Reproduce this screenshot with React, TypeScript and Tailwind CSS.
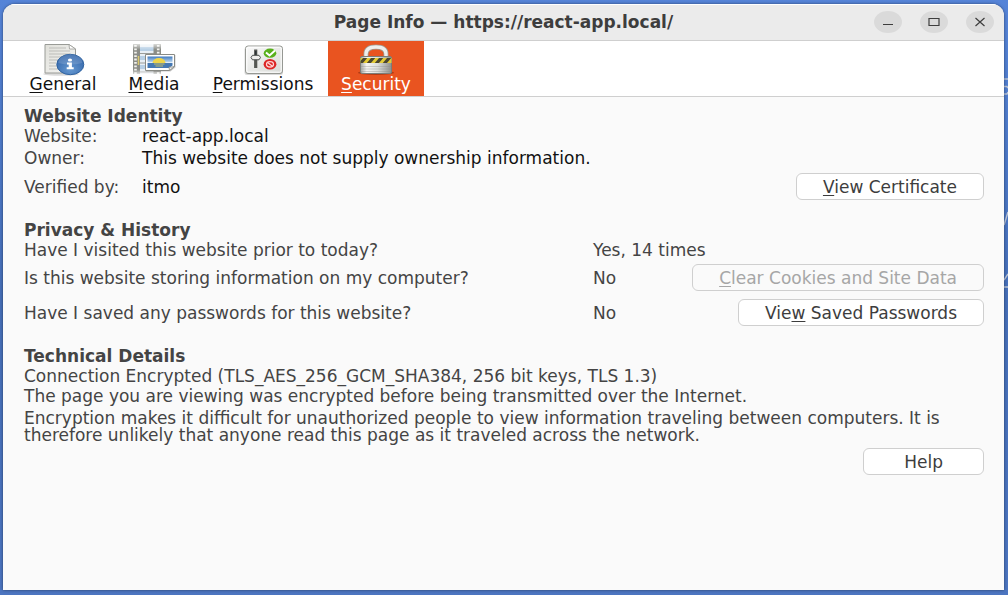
import { useState } from "react";
import type { ReactNode } from "react";

function GeneralIcon() {
  return (
    <svg viewBox="0 0 44 33" className="h-[33px] w-11" aria-hidden="true">
      <defs>
        <linearGradient id="paper" x1="0" y1="0" x2="1" y2="1">
          <stop offset="0" stopColor="#e0e0da" />
          <stop offset="1" stopColor="#f6f6f4" />
        </linearGradient>
        <radialGradient id="info" cx="0.5" cy="0.75" r="0.75">
          <stop offset="0" stopColor="#6598d0" />
          <stop offset="1" stopColor="#2f62a8" />
        </radialGradient>
      </defs>
      <ellipse cx="20" cy="31" rx="18" ry="1.8" fill="#000" opacity="0.14" />
      <path d="M4 1.500H28L34.500 6V30H4Z" fill="url(#paper)" stroke="#999b96" />
      <path d="M28 1.500L28.500 6H34.500Z" fill="#fff" stroke="#9a9a96" strokeWidth="0.800" />
      <path d="M8 5H25M8 8H29M8 11H29M8 14H28M8 17H17M8 20H15M8 23H16M8 26H18" stroke="#bdbdb9" strokeWidth="1" />
      <ellipse cx="29.300" cy="21.500" rx="13.500" ry="10.200" fill="url(#info)" stroke="#2f629f" />
      <path d="M17.300 20a12 8.700 0 0 1 24 0q-12 3-24 0Z" fill="#fff" opacity="0.150" />
      <ellipse cx="29" cy="17" rx="2.100" ry="1.500" fill="#fff" />
      <path d="M26 19.500h4.900v4.800h1.800v2h-7v-2h2v-2.900h-1.700Z" fill="#fff" />
    </svg>
  );
}

function MediaIcon() {
  return (
    <svg viewBox="0 0 44 33" className="h-[33px] w-11" aria-hidden="true">
      <defs>
        <linearGradient id="fade" x1="0" y1="0" x2="0" y2="1">
          <stop offset="0" stopColor="#fff" stopOpacity="0.200" />
          <stop offset="0.200" stopColor="#fff" />
          <stop offset="0.800" stopColor="#fff" />
          <stop offset="1" stopColor="#fff" stopOpacity="0.050" />
        </linearGradient>
        <mask id="film">
          <rect width="44" height="33" fill="url(#fade)" />
        </mask>
        <linearGradient id="sky" x1="0" y1="0" x2="0" y2="1">
          <stop offset="0" stopColor="#3f79bd" />
          <stop offset="1" stopColor="#c3dcf2" />
        </linearGradient>
      </defs>
      <g mask="url(#film)">
        <path d="M1 1H29V31H1Z" fill="#e8eff5" />
        <path d="M8 4H22V8H8ZM8 13H22V17H8ZM8 22H22V26H8Z" fill="#b8d0e6" />
        <path d="M8 10.500H22M8 20H22M8 29H22" stroke="#9a9c99" strokeWidth="1" />
        <path d="M1 1H8V31H1ZM21.500 1H29V31H21.500Z" fill="#8b8d87" />
        <path d="M3.500 2V31M26.200 2V31" stroke="#f3f3f0" strokeWidth="2.600" strokeDasharray="1.800 1.600" />
        <path d="M6.500 13V22" stroke="#d9c870" strokeWidth="1.500" />
      </g>
      <path d="M14 12H43.500V24.500L38.500 28.500H14Z" fill="#000" opacity="0.200" />
      <path d="M13.500 11.500H42.500V23.500L37.500 27.500H13.500Z" fill="#fff" stroke="#888a85" />
      <path d="M15.500 13.500H40.500V19.500H15.500Z" fill="url(#sky)" />
      <path d="M20.500 20a6.500 5 0 0 1 13 0Z" fill="#edd44a" />
      <path d="M15.500 20H40.500V22.500L37 25H15.500Z" fill="#4478b3" />
      <path d="M22 21H32.500M23.500 23H31" stroke="#d6c65c" strokeWidth="0.900" />
      <path d="M37.500 27.500L37 24Q40 24.300 42.500 23.500Z" fill="#eeeeec" stroke="#888a85" strokeWidth="0.800" />
    </svg>
  );
}

function PermissionsIcon() {
  return (
    <svg viewBox="0 0 44 33" className="h-[33px] w-11" aria-hidden="true">
      <defs>
        <linearGradient id="panel" x1="0" y1="0" x2="1" y2="1">
          <stop offset="0" stopColor="#fafafa" />
          <stop offset="1" stopColor="#d8dad6" />
        </linearGradient>
      </defs>
      <rect x="3.500" y="4" width="38.500" height="28" rx="2.500" fill="#000" opacity="0.150" />
      <rect x="4.500" y="3" width="37" height="27.500" rx="2.500" fill="url(#panel)" stroke="#969893" />
      <rect x="5.800" y="4.200" width="34.400" height="25" rx="1.500" fill="none" stroke="#fff" />
      <path d="M14.700 6.500V25" stroke="#555753" strokeWidth="3.200" />
      <path d="M14.700 8V12" stroke="#2e3436" strokeWidth="1.500" />
      <path d="M11.500 12.300H18L19.500 14.500L18 16.800H11.500L10 14.500Z" fill="#eeeeec" stroke="#4b4f4d" />
      <ellipse cx="29" cy="10.200" rx="6.300" ry="4.600" fill="#58b01c" />
      <path d="M25 9.500L28.500 12.400L34 7.500" fill="none" stroke="#fff" strokeWidth="2" />
      <ellipse cx="29" cy="21.300" rx="6.400" ry="5.200" fill="#dc2626" />
      <ellipse cx="29" cy="21.300" rx="3.500" ry="2.700" fill="none" stroke="#ffd4d4" strokeWidth="1.300" />
      <path d="M26.500 19.400L31.500 23.200" stroke="#ffd4d4" strokeWidth="1.300" />
    </svg>
  );
}

function SecurityIcon() {
  return (
    <svg viewBox="0 0 44 33" className="h-[33px] w-11" aria-hidden="true">
      <defs>
        <linearGradient id="metal" x1="0" y1="0" x2="1" y2="0">
          <stop offset="0" stopColor="#a5a7a2" />
          <stop offset="0.200" stopColor="#f5f5f3" />
          <stop offset="0.550" stopColor="#dddedb" />
          <stop offset="1" stopColor="#8f918d" />
        </linearGradient>
        <clipPath id="band">
          <rect x="6.500" y="15" width="31" height="5" />
        </clipPath>
      </defs>
      <ellipse cx="22" cy="29.800" rx="18" ry="2.200" fill="#4a1000" opacity="0.350" />
      <path d="M12 16V11Q12 4 22 4T32 11V16" fill="none" stroke="#a09a90" strokeWidth="5" />
      <path d="M12 16V11Q12 4 22 4T32 11V16" fill="none" stroke="#eeeeec" strokeWidth="3.400" />
      <rect x="6.500" y="13.500" width="31" height="17" rx="1.500" fill="url(#metal)" stroke="#7b7d78" />
      <rect x="6.500" y="15" width="31" height="5" fill="#e3cb35" />
      <path
        d="M6 21L12 14M14 21L20 14M22 21L28 14M30 21L36 14"
        stroke="#4a4630"
        strokeWidth="3.200"
        clipPath="url(#band)"
      />
      <path d="M7 23.500H37M7 26H37M7 28.500H37" stroke="#888a85" strokeWidth="0.700" opacity="0.500" />
    </svg>
  );
}

function Key({ children }: { children: string }) {
  return <span className="underline decoration-1 underline-offset-2">{children}</span>;
}

const tabs: { id: string; key: string; rest: string; width: string; icon: ReactNode }[] = [
  { id: "general", key: "G", rest: "eneral", width: "w-[94px]", icon: <GeneralIcon /> },
  { id: "media", key: "M", rest: "edia", width: "w-[88px]", icon: <MediaIcon /> },
  { id: "permissions", key: "P", rest: "ermissions", width: "w-[130px]", icon: <PermissionsIcon /> },
  { id: "security", key: "S", rest: "ecurity", width: "w-24", icon: <SecurityIcon /> },
];

function Action({ children, disabled = false }: { children: ReactNode; disabled?: boolean }) {
  return (
    <button
      type="button"
      disabled={disabled}
      className="h-[27px] shrink-0 rounded-md border border-[#cfcfcf] bg-white px-[26px] leading-5 whitespace-nowrap text-[#3d3d3d] disabled:bg-[#fafafa] disabled:text-[#a6a6a6]"
    >
      {children}
    </button>
  );
}

function WindowButton({ label, path }: { label: string; path: string }) {
  return (
    <button type="button" aria-label={label} className="flex h-[22px] w-7 items-center justify-center rounded-[50%] bg-[#dadada]">
      <svg viewBox="0 0 12 10" className="h-2.5 w-3" fill="none" stroke="#3d3d3d" strokeWidth="1.200" aria-hidden="true">
        <path d={path} />
      </svg>
    </button>
  );
}

function IdentityRow({ name, children }: { name: string; children: ReactNode }) {
  return (
    <div className="flex items-center">
      <dt className="w-[118px] shrink-0">{name}</dt>
      <dd className="text-[#111111]">{children}</dd>
    </div>
  );
}

function HistoryRow({ question, answer, action }: { question: string; answer: string; action?: ReactNode }) {
  return (
    <div className="grid grid-cols-[569fr_391fr] items-center">
      <dt>{question}</dt>
      <dd className="flex items-center justify-between">
        <span>{answer}</span>
        {action}
      </dd>
    </div>
  );
}

export default function App() {
  const [active, setActive] = useState("security");

  return (
    <div className="relative flex min-h-screen flex-col bg-[#4a72b8] bg-linear-to-b from-[#5584d8] via-[#466fb8] to-[#4c75c0] pt-1 pr-1 pb-[5px] pl-[3px] font-['DejaVu_Sans',sans-serif] text-[17px] leading-5 text-[#444444]">
      <svg viewBox="0 0 4 240" className="absolute top-[70px] right-0 h-60 w-1" fill="none" stroke="#b9c3d6" strokeWidth="1.500" aria-hidden="true">
        <path d="M0 9H4M0 16.500H3L4 18M0 24H3L4 22M0 155L4 142M0 210L4 204M0 217H4" />
      </svg>
      <div className="relative flex flex-1 flex-col overflow-hidden rounded-t-xl bg-[#fafafa] shadow-[0_0_3px_rgba(0,0,0,0.5)]">
        <header className="grid h-[37px] shrink-0 grid-cols-[1fr_auto_1fr] items-center border-t border-b border-t-white border-b-[#cfcfcf] bg-[#ebebeb] px-[10px] pb-[2px]">
          <h1 className="col-start-2 font-bold text-[#3d3d3d]">Page Info — https://react-app.local/</h1>
          <div className="flex justify-end gap-[18px]">
            <WindowButton label="Minimize" path="M1 7.500H11" />
            <WindowButton label="Maximize" path="M1 1.500H11V8.500H1Z" />
            <WindowButton label="Close" path="M1.500 1L10.500 9M10.500 1L1.500 9" />
          </div>
        </header>

        <nav role="tablist" aria-label="Page information" className="flex h-14 shrink-0 border-b border-[#cfcfcf] bg-white pl-[13px]">
          {tabs.map((tab) => (
            <button
              key={tab.id}
              type="button"
              role="tab"
              aria-selected={tab.id === active}
              onClick={() => setActive(tab.id)}
              className={`${tab.width} flex shrink-0 flex-col items-center pt-[2px] text-[#111111] aria-selected:bg-[#e95420] aria-selected:text-white`}
            >
              {tab.icon}
              <span className="leading-[17px]">
                <Key>{tab.key}</Key>
                {tab.rest}
              </span>
            </button>
          ))}
        </nav>

        <main className="flex flex-col pt-[9px] pr-5 pl-[21px]">
          <section>
            <h2 className="font-bold">Website Identity</h2>
            <dl>
              <IdentityRow name="Website:">react-app.local</IdentityRow>
              <div className="pt-[2px]">
                <IdentityRow name="Owner:">This website does not supply ownership information.</IdentityRow>
              </div>
              <div className="flex items-center justify-between pt-[5px]">
                <IdentityRow name="Verified by:">itmo</IdentityRow>
                <Action>
                  <Key>V</Key>iew Certificate
                </Action>
              </div>
            </dl>
          </section>

          <section className="pt-5">
            <h2 className="font-bold">Privacy &amp; History</h2>
            <dl>
              <HistoryRow question="Have I visited this website prior to today?" answer="Yes, 14 times" />
              <div className="pt-1">
                <HistoryRow
                  question="Is this website storing information on my computer?"
                  answer="No"
                  action={
                    <Action disabled>
                      <Key>C</Key>lear Cookies and Site Data
                    </Action>
                  }
                />
              </div>
              <div className="pt-2">
                <HistoryRow
                  question="Have I saved any passwords for this website?"
                  answer="No"
                  action={
                    <Action>
                      Vie<Key>w</Key> Saved Passwords
                    </Action>
                  }
                />
              </div>
            </dl>
          </section>

          <section className="flex flex-col pt-5">
            <h2 className="font-bold">Technical Details</h2>
            <p>Connection Encrypted (TLS_AES_256_GCM_SHA384, 256 bit keys, TLS 1.3)</p>
            <p>The page you are viewing was encrypted before being transmitted over the Internet.</p>
            <p className="pt-1 leading-[17px]">
              Encryption makes it difficult for unauthorized people to view information traveling between computers. It is
              therefore unlikely that anyone read this page as it traveled across the network.
            </p>
            <div className="flex justify-end pt-1">
              <button type="button" className="h-[27px] rounded-md border border-[#cfcfcf] bg-white px-10 text-[#3d3d3d]">
                Help
              </button>
            </div>
          </section>
        </main>
      </div>
    </div>
  );
}
